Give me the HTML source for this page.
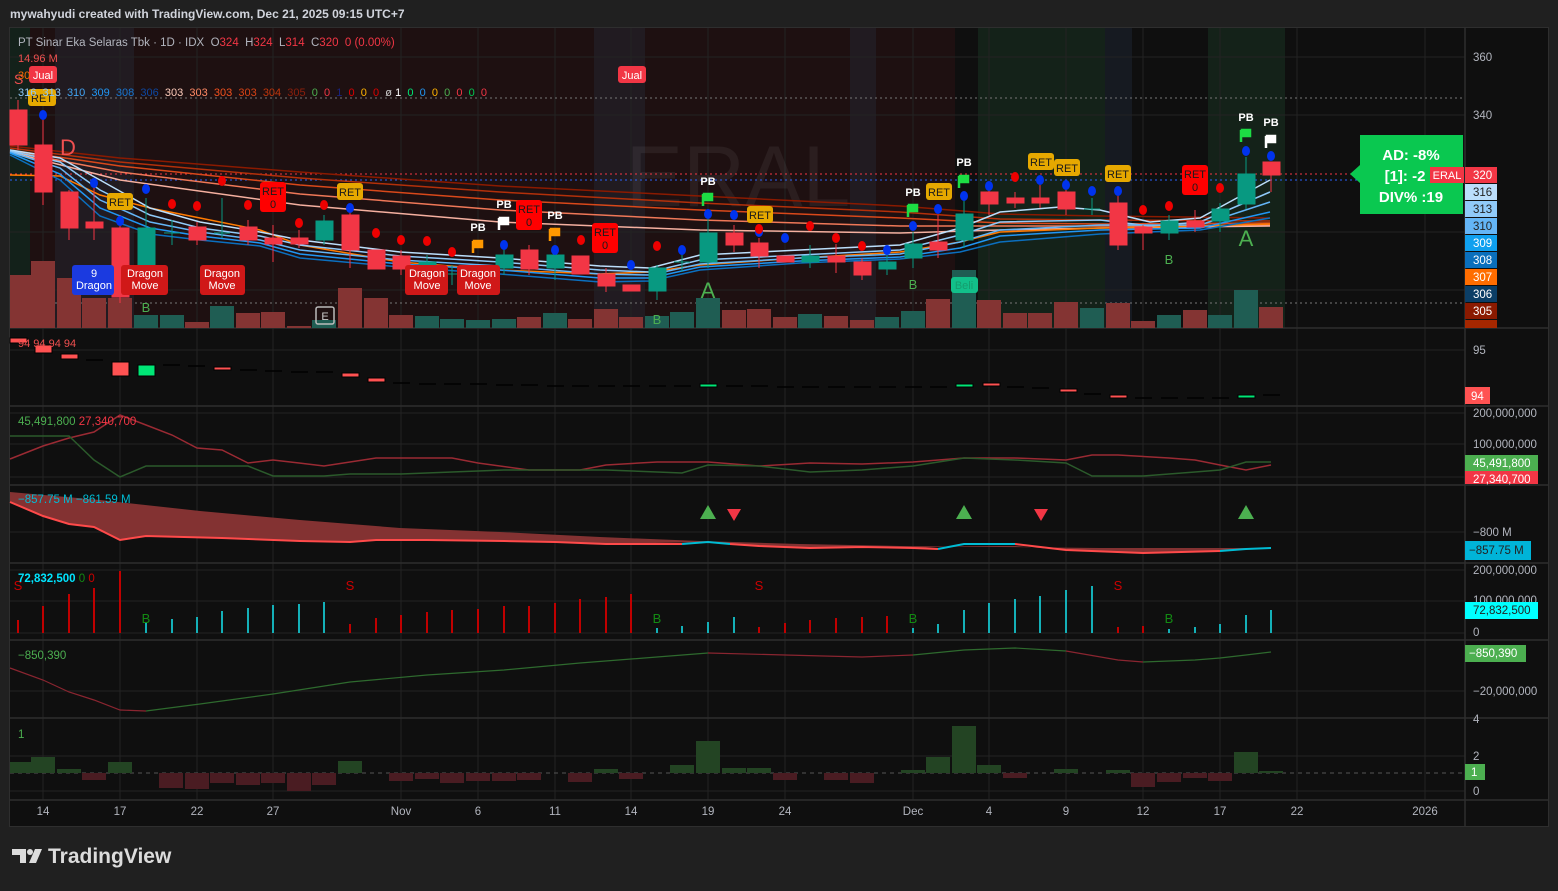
<!DOCTYPE html>
<html><head><meta charset="utf-8"><style>
html,body{margin:0;padding:0;background:#202020;}
body{width:1558px;height:886px;overflow:hidden;position:relative;font-family:"Liberation Sans",sans-serif;}
svg text{font-family:"Liberation Sans","DejaVu Sans",sans-serif;}
</style></head><body>
<svg width="1558" height="886" viewBox="0 0 1558 886" xmlns="http://www.w3.org/2000/svg">
<rect x="0" y="0" width="1558" height="886" fill="#202020"/>
<text x="10" y="18" font-size="12" font-weight="bold" fill="#d1d4dc">mywahyudi created with TradingView.com, Dec 21, 2025 09:15 UTC+7</text>
<rect x="9.5" y="27.5" width="1539" height="799" fill="#0f0f0f" stroke="#2e2e2e"/>
<rect x="10" y="28" width="945" height="300" fill="#1e1011"/>
<rect x="10" y="28" width="20" height="300" fill="#13211a"/>
<rect x="55" y="28" width="79" height="300" fill="#211b21"/>
<rect x="594" y="28" width="51" height="300" fill="#211b21"/>
<rect x="850" y="28" width="26" height="300" fill="#211b21"/>
<rect x="978" y="28" width="127" height="300" fill="#142219"/>
<rect x="1105" y="28" width="27" height="300" fill="#161a21"/>
<rect x="1208" y="28" width="77" height="300" fill="#142219"/>
<g stroke="#232323" stroke-width="1">
<line x1="43" y1="28" x2="43" y2="800"/><line x1="120" y1="28" x2="120" y2="800"/><line x1="197" y1="28" x2="197" y2="800"/><line x1="273" y1="28" x2="273" y2="800"/><line x1="401" y1="28" x2="401" y2="800"/><line x1="478" y1="28" x2="478" y2="800"/><line x1="555" y1="28" x2="555" y2="800"/><line x1="631" y1="28" x2="631" y2="800"/><line x1="708" y1="28" x2="708" y2="800"/><line x1="785" y1="28" x2="785" y2="800"/><line x1="913" y1="28" x2="913" y2="800"/><line x1="989" y1="28" x2="989" y2="800"/><line x1="1066" y1="28" x2="1066" y2="800"/><line x1="1143" y1="28" x2="1143" y2="800"/><line x1="1220" y1="28" x2="1220" y2="800"/><line x1="1297" y1="28" x2="1297" y2="800"/><line x1="1425" y1="28" x2="1425" y2="800"/>
<line x1="10" y1="57" x2="1465" y2="57"/><line x1="10" y1="115" x2="1465" y2="115"/><line x1="10" y1="232" x2="1465" y2="232"/><line x1="10" y1="290" x2="1465" y2="290"/>
<line x1="10" y1="350" x2="1465" y2="350"/><line x1="10" y1="413" x2="1465" y2="413"/><line x1="10" y1="444" x2="1465" y2="444"/><line x1="10" y1="477" x2="1465" y2="477"/><line x1="10" y1="532" x2="1465" y2="532"/><line x1="10" y1="570" x2="1465" y2="570"/><line x1="10" y1="601" x2="1465" y2="601"/><line x1="10" y1="633" x2="1465" y2="633"/><line x1="10" y1="691" x2="1465" y2="691"/><line x1="10" y1="756" x2="1465" y2="756"/><line x1="10" y1="791" x2="1465" y2="791"/>
</g>
<g stroke="#2e2e2e" stroke-width="1.5">
<line x1="10" y1="328" x2="1548" y2="328"/><line x1="10" y1="406" x2="1548" y2="406"/><line x1="10" y1="485" x2="1548" y2="485"/><line x1="10" y1="563" x2="1548" y2="563"/><line x1="10" y1="640" x2="1548" y2="640"/><line x1="10" y1="718" x2="1548" y2="718"/><line x1="10" y1="800" x2="1548" y2="800"/>
<line x1="1465" y1="28" x2="1465" y2="826"/>
</g>
<text x="738" y="206" font-size="86" fill="#ffffff" fill-opacity="0.06" text-anchor="middle">ERAL</text>
<line x1="10" y1="98" x2="1465" y2="98" stroke="#777" stroke-dasharray="2,3"/>
<line x1="10" y1="303" x2="1465" y2="303" stroke="#777" stroke-dasharray="2,3"/>
<line x1="10" y1="174" x2="1465" y2="174" stroke="#f23645" stroke-dasharray="2,3"/>
<line x1="10" y1="180" x2="1465" y2="180" stroke="#2962ff" stroke-dasharray="2,3"/>
<g fill="#843433">
<rect x="10" y="275" width="21" height="53"/><rect x="31" y="261" width="24" height="67"/><rect x="57" y="278" width="24" height="50"/><rect x="82" y="298" width="24" height="30"/><rect x="108" y="298" width="24" height="30"/><rect x="185" y="322" width="24" height="6"/><rect x="236" y="313" width="24" height="15"/><rect x="261" y="312" width="24" height="16"/><rect x="287" y="326" width="24" height="2"/><rect x="338" y="288" width="24" height="40"/><rect x="364" y="298" width="24" height="30"/><rect x="389" y="315" width="24" height="13"/><rect x="517" y="317" width="24" height="11"/><rect x="568" y="319" width="24" height="9"/><rect x="594" y="309" width="24" height="19"/><rect x="619" y="317" width="24" height="11"/><rect x="722" y="310" width="24" height="18"/><rect x="747" y="309" width="24" height="19"/><rect x="773" y="317" width="24" height="11"/><rect x="824" y="316" width="24" height="12"/><rect x="850" y="320" width="24" height="8"/><rect x="926" y="299" width="24" height="29"/><rect x="977" y="300" width="24" height="28"/><rect x="1003" y="313" width="24" height="15"/><rect x="1028" y="313" width="24" height="15"/><rect x="1054" y="302" width="24" height="26"/><rect x="1106" y="303" width="24" height="25"/><rect x="1131" y="321" width="24" height="7"/><rect x="1183" y="310" width="24" height="18"/><rect x="1259" y="307" width="24" height="21"/>
</g>
<g fill="#1f5d53">
<rect x="134" y="315" width="24" height="13"/><rect x="160" y="315" width="24" height="13"/><rect x="210" y="306" width="24" height="22"/><rect x="312" y="320" width="24" height="8"/><rect x="415" y="316" width="24" height="12"/><rect x="440" y="319" width="24" height="9"/><rect x="466" y="320" width="24" height="8"/><rect x="492" y="319" width="24" height="9"/><rect x="543" y="313" width="24" height="15"/><rect x="645" y="316" width="24" height="12"/><rect x="670" y="312" width="24" height="16"/><rect x="696" y="298" width="24" height="30"/><rect x="798" y="314" width="24" height="14"/><rect x="875" y="317" width="24" height="11"/><rect x="901" y="311" width="24" height="17"/><rect x="952" y="270" width="24" height="58"/><rect x="1080" y="308" width="24" height="20"/><rect x="1157" y="315" width="24" height="13"/><rect x="1208" y="315" width="24" height="13"/><rect x="1234" y="290" width="24" height="38"/>
</g>
<g fill="none" stroke-width="1.5">
<polyline stroke="#8b1a00" points="10,146 120,158 300,172 500,186 700,196 900,206 1000,214 1100,216 1270,218"/>
<polyline stroke="#b3300a" points="10,148 120,162 300,178 500,192 700,203 900,212 1000,219 1100,220 1270,221"/>
<polyline stroke="#d9481a" points="10,150 120,166 300,185 500,200 700,210 900,218 1000,223 1100,224 1270,223"/>
<polyline stroke="#f07858" points="10,151 120,172 300,194 500,210 700,220 900,226 1000,226 1100,226 1270,225"/>
<polyline stroke="#f5b0a0" points="10,152 120,180 300,205 500,222 700,230 900,233 1000,230 1100,228 1270,226"/>
<polyline stroke="#ff7a00" points="10,175 60,176 100,195 150,208 200,218 260,230 300,245 400,262 500,270 600,274 650,272 700,265 800,258 900,252 960,242 1000,232 1100,228 1200,226 1270,224"/>
<polyline stroke="#bbdefb" points="10,150 60,158 100,180 150,208 200,222 260,232 300,240 400,252 500,258 600,266 650,268 700,255 800,250 900,245 960,228 1000,212 1060,207 1100,210 1150,222 1200,218 1270,180"/>
<polyline stroke="#90caf9" points="10,151 60,162 100,190 150,215 200,228 260,236 300,245 400,256 500,262 600,270 650,272 700,260 800,255 900,250 960,235 1000,222 1100,220 1150,226 1200,222 1270,192"/>
<polyline stroke="#64b5f6" points="10,152 60,168 100,200 150,222 200,232 260,240 300,250 400,260 500,266 600,274 650,275 700,264 800,258 900,254 960,242 1000,230 1100,225 1200,225 1270,202"/>
<polyline stroke="#2196f3" points="10,153 60,174 100,208 150,228 200,236 260,243 300,254 400,264 500,270 600,278 650,278 700,267 800,261 900,257 960,248 1000,236 1100,230 1200,228 1270,212"/>
<polyline stroke="#0b6fbf" points="10,155 60,180 100,216 150,234 200,240 260,246 300,258 400,267 500,274 600,282 650,281 700,270 800,263 900,259 960,252 1000,242 1100,234 1200,230 1270,218"/>
</g>
<g stroke-width="1">
<g fill="#f23645" stroke="#f23645">
<line x1="18" y1="100" x2="18" y2="150"/><rect x="10" y="110" width="17" height="35"/>
<line x1="43" y1="115" x2="43" y2="205"/><rect x="35" y="145" width="17" height="47"/>
<line x1="69" y1="190" x2="69" y2="240"/><rect x="61" y="192" width="17" height="36"/>
<line x1="94" y1="185" x2="94" y2="240"/><rect x="86" y="222" width="17" height="6"/>
<line x1="120" y1="215" x2="120" y2="303"/><rect x="112" y="228" width="17" height="69"/>
<line x1="197" y1="222" x2="197" y2="245"/><rect x="189" y="227" width="17" height="13"/>
<line x1="248" y1="220" x2="248" y2="245"/><rect x="240" y="227" width="17" height="13"/>
<line x1="273" y1="225" x2="273" y2="262"/><rect x="265" y="238" width="17" height="6"/>
<line x1="299" y1="230" x2="299" y2="248"/><rect x="291" y="238" width="17" height="6"/>
<line x1="350" y1="210" x2="350" y2="268"/><rect x="342" y="215" width="17" height="35"/>
<rect x="368" y="250" width="17" height="19"/>
<line x1="401" y1="250" x2="401" y2="275"/><rect x="393" y="256" width="17" height="13"/>
<line x1="529" y1="245" x2="529" y2="275"/><rect x="521" y="250" width="17" height="19"/>
<rect x="572" y="256" width="17" height="18"/>
<line x1="606" y1="268" x2="606" y2="292"/><rect x="598" y="274" width="17" height="12"/>
<rect x="623" y="285" width="17" height="6"/>
<line x1="734" y1="225" x2="734" y2="252"/><rect x="726" y="233" width="17" height="12"/>
<line x1="759" y1="238" x2="759" y2="268"/><rect x="751" y="243" width="17" height="13"/>
<rect x="777" y="256" width="17" height="6"/>
<line x1="836" y1="244" x2="836" y2="273"/><rect x="828" y="256" width="17" height="6"/>
<line x1="862" y1="258" x2="862" y2="280"/><rect x="854" y="262" width="17" height="13"/>
<line x1="938" y1="215" x2="938" y2="258"/><rect x="930" y="242" width="17" height="8"/>
<line x1="989" y1="190" x2="989" y2="215"/><rect x="981" y="192" width="17" height="12"/>
<line x1="1015" y1="192" x2="1015" y2="208"/><rect x="1007" y="198" width="17" height="5"/>
<line x1="1040" y1="185" x2="1040" y2="208"/><rect x="1032" y="198" width="17" height="5"/>
<line x1="1066" y1="185" x2="1066" y2="215"/><rect x="1058" y="192" width="17" height="17"/>
<line x1="1118" y1="195" x2="1118" y2="250"/><rect x="1110" y="203" width="17" height="42"/>
<line x1="1143" y1="225" x2="1143" y2="250"/><rect x="1135" y="227" width="17" height="6"/>
<line x1="1195" y1="210" x2="1195" y2="232"/><rect x="1187" y="221" width="17" height="6"/>
<line x1="1271" y1="162" x2="1271" y2="192"/><rect x="1263" y="162" width="17" height="13"/>
</g>
<g fill="#089981" stroke="#089981">
<line x1="146" y1="198" x2="146" y2="295"/><rect x="138" y="228" width="17" height="59"/>
<line x1="172" y1="220" x2="172" y2="245"/><line x1="164" y1="233" x2="180" y2="233"/>
<line x1="222" y1="198" x2="222" y2="238"/><line x1="214" y1="233" x2="230" y2="233"/>
<line x1="324" y1="215" x2="324" y2="245"/><rect x="316" y="221" width="17" height="19"/>
<line x1="427" y1="255" x2="427" y2="275"/><rect x="419" y="262" width="17" height="5"/>
<line x1="452" y1="265" x2="452" y2="285"/><line x1="444" y1="274" x2="460" y2="274"/>
<rect x="470" y="268" width="17" height="13"/>
<line x1="504" y1="245" x2="504" y2="275"/><rect x="496" y="255" width="17" height="13"/>
<line x1="555" y1="245" x2="555" y2="280"/><rect x="547" y="255" width="17" height="13"/>
<line x1="657" y1="265" x2="657" y2="300"/><rect x="649" y="268" width="17" height="23"/>
<line x1="682" y1="255" x2="682" y2="272"/><line x1="674" y1="262" x2="690" y2="262"/>
<line x1="708" y1="215" x2="708" y2="268"/><rect x="700" y="233" width="17" height="29"/>
<line x1="810" y1="245" x2="810" y2="268"/><rect x="802" y="256" width="17" height="6"/>
<line x1="887" y1="255" x2="887" y2="275"/><rect x="879" y="262" width="17" height="7"/>
<line x1="913" y1="232" x2="913" y2="268"/><rect x="905" y="244" width="17" height="14"/>
<line x1="964" y1="200" x2="964" y2="248"/><rect x="956" y="214" width="17" height="26"/>
<line x1="1092" y1="198" x2="1092" y2="215"/><line x1="1084" y1="209" x2="1100" y2="209"/>
<line x1="1169" y1="215" x2="1169" y2="240"/><rect x="1161" y="221" width="17" height="12"/>
<line x1="1220" y1="203" x2="1220" y2="232"/><rect x="1212" y="209" width="17" height="12"/>
<line x1="1246" y1="157" x2="1246" y2="209"/><rect x="1238" y="174" width="17" height="30"/>
</g>
</g>
<g fill="#0033ee">
<ellipse cx="43" cy="115" rx="4" ry="5"/><ellipse cx="94" cy="183" rx="4" ry="5"/><ellipse cx="120" cy="221" rx="4" ry="5"/><ellipse cx="146" cy="189" rx="4" ry="5"/><ellipse cx="350" cy="208" rx="4" ry="5"/><ellipse cx="504" cy="245" rx="4" ry="5"/><ellipse cx="555" cy="250" rx="4" ry="5"/><ellipse cx="631" cy="265" rx="4" ry="5"/><ellipse cx="682" cy="250" rx="4" ry="5"/><ellipse cx="708" cy="214" rx="4" ry="5"/><ellipse cx="734" cy="215" rx="4" ry="5"/><ellipse cx="759" cy="232" rx="4" ry="5"/><ellipse cx="785" cy="238" rx="4" ry="5"/><ellipse cx="887" cy="250" rx="4" ry="5"/><ellipse cx="913" cy="226" rx="4" ry="5"/><ellipse cx="938" cy="209" rx="4" ry="5"/><ellipse cx="964" cy="196" rx="4" ry="5"/><ellipse cx="989" cy="186" rx="4" ry="5"/><ellipse cx="1040" cy="180" rx="4" ry="5"/><ellipse cx="1066" cy="185" rx="4" ry="5"/><ellipse cx="1092" cy="191" rx="4" ry="5"/><ellipse cx="1118" cy="191" rx="4" ry="5"/><ellipse cx="1246" cy="151" rx="4" ry="5"/><ellipse cx="1271" cy="156" rx="4" ry="5"/>
</g>
<g fill="#ee0000">
<ellipse cx="172" cy="204" rx="4" ry="5"/><ellipse cx="197" cy="206" rx="4" ry="5"/><ellipse cx="222" cy="181" rx="4" ry="5"/><ellipse cx="248" cy="205" rx="4" ry="5"/><ellipse cx="299" cy="223" rx="4" ry="5"/><ellipse cx="324" cy="205" rx="4" ry="5"/><ellipse cx="376" cy="233" rx="4" ry="5"/><ellipse cx="401" cy="240" rx="4" ry="5"/><ellipse cx="427" cy="241" rx="4" ry="5"/><ellipse cx="452" cy="252" rx="4" ry="5"/><ellipse cx="581" cy="240" rx="4" ry="5"/><ellipse cx="657" cy="246" rx="4" ry="5"/><ellipse cx="759" cy="229" rx="4" ry="5"/><ellipse cx="810" cy="226" rx="4" ry="5"/><ellipse cx="836" cy="238" rx="4" ry="5"/><ellipse cx="862" cy="246" rx="4" ry="5"/><ellipse cx="1015" cy="177" rx="4" ry="5"/><ellipse cx="1143" cy="210" rx="4" ry="5"/><ellipse cx="1169" cy="206" rx="4" ry="5"/><ellipse cx="1220" cy="188" rx="4" ry="5"/>
</g>
<g font-size="11">
<g fill="#e6a800"><rect x="28" y="89" width="28" height="17" rx="3"/><rect x="107" y="193" width="26" height="17" rx="3"/><rect x="337" y="183" width="26" height="17" rx="3"/><rect x="747" y="206" width="26" height="17" rx="3"/><rect x="926" y="183" width="26" height="17" rx="3"/><rect x="1028" y="153" width="26" height="17" rx="3"/><rect x="1054" y="159" width="26" height="17" rx="3"/><rect x="1105" y="165" width="26" height="17" rx="3"/></g>
<g fill="#1a1a1a"><text x="31" y="102">RET</text><text x="109" y="206">RET</text><text x="339" y="196">RET</text><text x="749" y="219">RET</text><text x="928" y="196">RET</text><text x="1030" y="166">RET</text><text x="1056" y="172">RET</text><text x="1107" y="178">RET</text></g>
<g fill="#ff0000"><rect x="260" y="182" width="26" height="30" rx="3"/><rect x="516" y="200" width="26" height="30" rx="3"/><rect x="592" y="223" width="26" height="30" rx="3"/><rect x="1182" y="165" width="26" height="30" rx="3"/></g>
<g fill="#1a1a1a" text-anchor="middle"><text x="273" y="195">RET</text><text x="273" y="208">0</text><text x="529" y="213">RET</text><text x="529" y="226">0</text><text x="605" y="236">RET</text><text x="605" y="249">0</text><text x="1195" y="178">RET</text><text x="1195" y="191">0</text></g>
<g fill="#f23645"><rect x="618" y="66" width="28" height="17" rx="3"/><rect x="29" y="66" width="28" height="17" rx="3"/></g>
<g fill="#fff" text-anchor="middle"><text x="632" y="79">Jual</text><text x="43" y="79">Jual</text></g>
<g fill="#d01818"><rect x="200" y="265" width="45" height="30" rx="3"/><rect x="405" y="265" width="43" height="30" rx="3"/><rect x="457" y="265" width="43" height="30" rx="3"/><rect x="121" y="265" width="47" height="30" rx="3"/></g>
<rect x="72" y="265" width="42" height="30" rx="3" fill="#1b3ae0"/>
<g fill="#fff" text-anchor="middle"><text x="222" y="277">Dragon</text><text x="222" y="289">Move</text><text x="427" y="277">Dragon</text><text x="427" y="289">Move</text><text x="478" y="277">Dragon</text><text x="478" y="289">Move</text><text x="145" y="277">Dragon</text><text x="145" y="289">Move</text><text x="94" y="277">9</text><text x="94" y="289">Dragon</text></g>
<g fill="#fff" font-weight="bold" text-anchor="middle"><text x="478" y="231">PB</text><text x="504" y="208">PB</text><text x="555" y="219">PB</text><text x="708" y="185">PB</text><text x="913" y="196">PB</text><text x="964" y="166">PB</text><text x="1246" y="121">PB</text><text x="1271" y="126">PB</text></g>
<rect x="951" y="277" width="27" height="16" rx="3" fill="#12c08a"/><text x="964" y="289" fill="#159d6e" text-anchor="middle">Beli</text>
<rect x="316" y="307" width="18" height="17" fill="none" stroke="#bbb" stroke-width="1.5" rx="2"/><text x="325" y="320" fill="#ccc" text-anchor="middle">E</text>
</g>
<g stroke-width="2.5">
<g fill="#ff9800" stroke="#ff9800"><line x1="473" y1="241" x2="473" y2="253"/><rect x="474" y="241" width="8" height="6"/><line x1="550" y1="229" x2="550" y2="241"/><rect x="551" y="229" width="8" height="6"/></g>
<g fill="#fff" stroke="#fff"><line x1="499" y1="218" x2="499" y2="230"/><rect x="500" y="218" width="8" height="6"/><line x1="1266" y1="136" x2="1266" y2="148"/><rect x="1267" y="136" width="8" height="6"/></g>
<g fill="#1ddd44" stroke="#1ddd44"><line x1="703" y1="194" x2="703" y2="206"/><rect x="704" y="194" width="8" height="6"/><line x1="908" y1="205" x2="908" y2="217"/><rect x="909" y="205" width="8" height="6"/><line x1="959" y1="176" x2="959" y2="188"/><rect x="960" y="176" width="8" height="6"/><line x1="1241" y1="130" x2="1241" y2="142"/><rect x="1242" y="130" width="8" height="6"/></g>
</g>
<g font-size="22" fill="#4caf50" text-anchor="middle"><text x="708" y="298">A</text><text x="1246" y="246">A</text></g>
<g font-size="13" fill="#4caf50" text-anchor="middle"><text x="146" y="312">B</text><text x="657" y="324">B</text><text x="913" y="289">B</text><text x="1169" y="264">B</text></g>
<text x="60" y="155" font-size="22" fill="#f05050">D</text>
<text x="14" y="84" font-size="14" fill="#f05050">S</text>
<text x="18" y="46" font-size="11.5" fill="#b2b5be" xml:space="preserve">PT Sinar Eka Selaras Tbk · 1D · IDX  O<tspan fill="#f23645">324</tspan>  H<tspan fill="#f23645">324</tspan>  L<tspan fill="#f23645">314</tspan>  C<tspan fill="#f23645">320</tspan>  <tspan fill="#f23645">0 (0.00%)</tspan></text>
<text x="18" y="62" font-size="11" fill="#f05050">14.96 M</text>
<text x="18" y="79" font-size="11" fill="#ff6d00">30</text>
<text x="18" y="96" font-size="11" fill="#90caf9" xml:space="preserve">316  313  <tspan fill="#42a5f5">310</tspan>  <tspan fill="#2196f3">309</tspan>  <tspan fill="#1976d2">308</tspan>  <tspan fill="#0d47a1">306</tspan>  <tspan fill="#ffccbc">303</tspan>  <tspan fill="#ff8a65">303</tspan>  <tspan fill="#f4511e">303</tspan>  <tspan fill="#d84315">303</tspan>  <tspan fill="#bf360c">304</tspan>  <tspan fill="#8d1f0c">305</tspan>  <tspan fill="#4caf50">0</tspan>  <tspan fill="#f23645">0</tspan>  <tspan fill="#1a237e">1</tspan>  <tspan fill="#d00">0</tspan>  <tspan fill="#ffb300">0</tspan>  <tspan fill="#d00">0</tspan>  <tspan fill="#ccc">ø</tspan> <tspan fill="#fff">1</tspan>  <tspan fill="#00e676">0</tspan>  <tspan fill="#2196f3">0</tspan>  <tspan fill="#ffb300">0</tspan>  <tspan fill="#4caf50">0</tspan>  <tspan fill="#f23645">0</tspan>  <tspan fill="#00c853">0</tspan>  <tspan fill="#f23645">0</tspan></text>
<!-- pane2 -->
<g fill="#ff5252" stroke="#000" stroke-width="1">
<rect x="10" y="338" width="17" height="5"/><rect x="35" y="345" width="17" height="8"/><rect x="61" y="354" width="17" height="5"/><rect x="112" y="362" width="17" height="14"/><rect x="214" y="367" width="17" height="3"/><rect x="342" y="373" width="17" height="4"/><rect x="368" y="378" width="17" height="4"/><rect x="983" y="383" width="17" height="3"/><rect x="1060" y="389" width="17" height="3"/><rect x="1110" y="395" width="17" height="3"/>
<rect x="138" y="365" width="17" height="11" fill="#00e676"/><rect x="700" y="384" width="17" height="3" fill="#00e676"/><rect x="956" y="384" width="17" height="3" fill="#00e676"/><rect x="1238" y="395" width="17" height="3" fill="#00e676"/>
</g>
<g stroke="#000" stroke-width="1.5">
<line x1="86" y1="360" x2="103" y2="360"/><line x1="163" y1="365" x2="180" y2="365"/><line x1="188" y1="366" x2="205" y2="366"/><line x1="240" y1="370" x2="257" y2="370"/><line x1="265" y1="371" x2="282" y2="371"/><line x1="291" y1="372" x2="308" y2="372"/><line x1="316" y1="372" x2="333" y2="372"/>
<line x1="393" y1="383" x2="410" y2="383"/><line x1="419" y1="384" x2="436" y2="384"/><line x1="444" y1="384" x2="461" y2="384"/><line x1="470" y1="384" x2="487" y2="384"/><line x1="496" y1="385" x2="513" y2="385"/><line x1="521" y1="385" x2="538" y2="385"/><line x1="547" y1="386" x2="564" y2="386"/><line x1="572" y1="386" x2="589" y2="386"/><line x1="598" y1="386" x2="615" y2="386"/><line x1="623" y1="386" x2="640" y2="386"/><line x1="649" y1="386" x2="666" y2="386"/><line x1="674" y1="386" x2="691" y2="386"/><line x1="726" y1="386" x2="743" y2="386"/><line x1="751" y1="386" x2="768" y2="386"/><line x1="777" y1="387" x2="794" y2="387"/><line x1="802" y1="387" x2="819" y2="387"/><line x1="828" y1="387" x2="845" y2="387"/><line x1="854" y1="387" x2="871" y2="387"/><line x1="879" y1="387" x2="896" y2="387"/><line x1="905" y1="387" x2="922" y2="387"/><line x1="930" y1="387" x2="947" y2="387"/><line x1="1007" y1="387" x2="1024" y2="387"/><line x1="1032" y1="388" x2="1049" y2="388"/><line x1="1084" y1="394" x2="1101" y2="394"/><line x1="1135" y1="398" x2="1152" y2="398"/><line x1="1161" y1="398" x2="1178" y2="398"/><line x1="1187" y1="398" x2="1204" y2="398"/><line x1="1212" y1="398" x2="1229" y2="398"/><line x1="1263" y1="395" x2="1280" y2="395"/>
</g>
<text x="18" y="347" font-size="11" fill="#f05050">94  94  94  94</text>
<!-- pane3 -->
<polyline fill="none" stroke="#9a2a33" stroke-width="1.5" points="10,459 43,446 69,438 94,432 120,415 146,425 172,435 197,448 222,450 248,463 273,460 299,463 324,466 350,462 376,458 452,458 478,463 529,470 580,470 606,465 657,462 708,462 759,466 810,463 862,464 913,462 964,458 1015,458 1066,460 1092,455 1118,455 1169,458 1195,460 1220,465 1246,470 1271,465"/>
<polyline fill="none" stroke="#2b5a2b" stroke-width="1.5" points="10,436 69,436 94,460 120,477 146,466 248,466 273,476 324,476 350,474 401,474 452,472 504,470 555,470 606,470 682,473 708,465 759,466 810,472 862,470 913,466 964,458 1015,460 1066,463 1092,476 1143,476 1195,472 1220,470 1246,462 1271,462"/>
<text x="18" y="425" font-size="11.5" fill="#4caf50">45,491,800 <tspan fill="#f23645">27,340,700</tspan></text>
<!-- pane4 -->
<polygon fill="#833232" points="10,492 100,500 200,511 300,520 400,528 500,532 600,537 700,541 800,544 900,546 1000,547 1100,548 1270,548 1220,551 1143,553 1066,550 1015,546 964,546 913,548 862,547 810,548 759,546 708,542 606,544 555,542 504,541 452,541 427,540 376,540 350,542 300,541 222,538 146,536 120,540 94,527 69,524 43,516 10,502"/>
<polyline fill="none" stroke="#ff4a4a" stroke-width="2" points="10,502 43,516 69,524 94,527 120,540 146,536 222,538 300,541 350,542 376,540 427,540 504,541 555,542 606,544 682,544"/>
<polyline fill="none" stroke="#00bcd4" stroke-width="2" points="682,544 708,542 730,544"/>
<polyline fill="none" stroke="#ff4a4a" stroke-width="2" points="730,544 759,546 810,548 862,547 913,548 938,549"/>
<polyline fill="none" stroke="#00bcd4" stroke-width="2" points="938,549 964,544 1015,544"/>
<polyline fill="none" stroke="#ff4a4a" stroke-width="2" points="1015,544 1066,550 1143,553 1220,551"/>
<polyline fill="none" stroke="#00bcd4" stroke-width="2" points="1220,551 1246,549 1271,548"/>
<text x="18" y="503" font-size="11.5" fill="#00bcd4">−857.75 M  −861.59 M</text>
<g fill="#4caf50"><polygon points="708,505 716,519 700,519"/><polygon points="964,505 972,519 956,519"/><polygon points="1246,505 1254,519 1238,519"/></g>
<g fill="#f23645"><polygon points="727,509 741,509 734,521"/><polygon points="1034,509 1048,509 1041,521"/></g>
<!-- pane5 -->
<g stroke="#c00000" stroke-width="2">
<line x1="18" y1="633" x2="18" y2="620"/><line x1="43" y1="633" x2="43" y2="606"/><line x1="69" y1="633" x2="69" y2="594"/><line x1="94" y1="633" x2="94" y2="588"/><line x1="120" y1="633" x2="120" y2="571"/>
<line x1="350" y1="633" x2="350" y2="624"/><line x1="376" y1="633" x2="376" y2="618"/><line x1="401" y1="633" x2="401" y2="615"/><line x1="427" y1="633" x2="427" y2="612"/><line x1="452" y1="633" x2="452" y2="610"/><line x1="478" y1="633" x2="478" y2="609"/><line x1="504" y1="633" x2="504" y2="606"/><line x1="529" y1="633" x2="529" y2="606"/><line x1="555" y1="633" x2="555" y2="603"/><line x1="580" y1="633" x2="580" y2="599"/><line x1="606" y1="633" x2="606" y2="597"/><line x1="631" y1="633" x2="631" y2="594"/>
<line x1="759" y1="633" x2="759" y2="627"/><line x1="785" y1="633" x2="785" y2="623"/><line x1="810" y1="633" x2="810" y2="620"/><line x1="836" y1="633" x2="836" y2="618"/><line x1="862" y1="633" x2="862" y2="617"/><line x1="887" y1="633" x2="887" y2="616"/>
<line x1="1118" y1="633" x2="1118" y2="627"/><line x1="1143" y1="633" x2="1143" y2="626"/>
</g>
<g stroke="#14b0b8" stroke-width="2">
<line x1="146" y1="633" x2="146" y2="623"/><line x1="172" y1="633" x2="172" y2="619"/><line x1="197" y1="633" x2="197" y2="617"/><line x1="222" y1="633" x2="222" y2="611"/><line x1="248" y1="633" x2="248" y2="608"/><line x1="273" y1="633" x2="273" y2="605"/><line x1="299" y1="633" x2="299" y2="604"/><line x1="324" y1="633" x2="324" y2="602"/>
<line x1="657" y1="633" x2="657" y2="628"/><line x1="682" y1="633" x2="682" y2="626"/><line x1="708" y1="633" x2="708" y2="622"/><line x1="734" y1="633" x2="734" y2="617"/>
<line x1="913" y1="633" x2="913" y2="628"/><line x1="938" y1="633" x2="938" y2="624"/><line x1="964" y1="633" x2="964" y2="610"/><line x1="989" y1="633" x2="989" y2="603"/><line x1="1015" y1="633" x2="1015" y2="599"/><line x1="1040" y1="633" x2="1040" y2="596"/><line x1="1066" y1="633" x2="1066" y2="590"/><line x1="1092" y1="633" x2="1092" y2="586"/>
<line x1="1169" y1="633" x2="1169" y2="629"/><line x1="1195" y1="633" x2="1195" y2="627"/><line x1="1220" y1="633" x2="1220" y2="624"/><line x1="1246" y1="633" x2="1246" y2="615"/><line x1="1271" y1="633" x2="1271" y2="610"/>
</g>
<g font-size="13" fill="#cc0000" text-anchor="middle"><text x="18" y="590">S</text><text x="350" y="590">S</text><text x="759" y="590">S</text><text x="1118" y="590">S</text></g>
<g font-size="13" fill="#138a13" text-anchor="middle"><text x="146" y="623">B</text><text x="657" y="623">B</text><text x="913" y="623">B</text><text x="1169" y="623">B</text></g>
<text x="18" y="582" font-size="11.5" fill="#00e5ff" font-weight="bold">72,832,500 <tspan fill="#138a13" font-weight="normal"> 0</tspan><tspan fill="#cc0000" font-weight="normal">  0</tspan></text>
<!-- pane6 -->
<polyline fill="none" stroke="#8a2530" stroke-width="1.2" points="10,668 43,680 69,692 94,700 120,710 146,711"/>
<polyline fill="none" stroke="#2e6a2e" stroke-width="1.2" points="146,711 200,704 273,694 350,682 427,675 504,670 580,663 657,657 708,653"/>
<polyline fill="none" stroke="#8a2530" stroke-width="1.2" points="708,653 785,655 862,657 913,655"/>
<polyline fill="none" stroke="#2e6a2e" stroke-width="1.2" points="913,655 964,650 1015,648 1066,651"/>
<polyline fill="none" stroke="#8a2530" stroke-width="1.2" points="1066,651 1118,660 1143,662"/>
<polyline fill="none" stroke="#2e6a2e" stroke-width="1.2" points="1143,662 1195,660 1220,658 1246,655 1271,652"/>
<text x="18" y="659" font-size="11.5" fill="#4caf50">−850,390</text>
<!-- pane7 -->
<line x1="10" y1="773" x2="1465" y2="773" stroke="#555" stroke-dasharray="4,4"/>
<g fill="#234423">
<rect x="10" y="762" width="21" height="11"/><rect x="31" y="757" width="24" height="16"/><rect x="57" y="769" width="24" height="4"/><rect x="108" y="762" width="24" height="11"/><rect x="338" y="761" width="24" height="12"/><rect x="594" y="769" width="24" height="4"/><rect x="670" y="765" width="24" height="8"/><rect x="696" y="741" width="24" height="32"/><rect x="722" y="768" width="24" height="5"/><rect x="747" y="768" width="24" height="5"/><rect x="901" y="770" width="24" height="3"/><rect x="926" y="757" width="24" height="16"/><rect x="952" y="726" width="24" height="47"/><rect x="977" y="765" width="24" height="8"/><rect x="1054" y="769" width="24" height="4"/><rect x="1106" y="770" width="24" height="3"/><rect x="1234" y="752" width="24" height="21"/><rect x="1259" y="771" width="24" height="2"/>
</g>
<g fill="#4a1c22">
<rect x="82" y="773" width="24" height="7"/><rect x="159" y="773" width="24" height="15"/><rect x="185" y="773" width="24" height="16"/><rect x="210" y="773" width="24" height="10"/><rect x="236" y="773" width="24" height="12"/><rect x="261" y="773" width="24" height="10"/><rect x="287" y="773" width="24" height="18"/><rect x="312" y="773" width="24" height="12"/><rect x="389" y="773" width="24" height="8"/><rect x="415" y="773" width="24" height="6"/><rect x="440" y="773" width="24" height="10"/><rect x="466" y="773" width="24" height="8"/><rect x="492" y="773" width="24" height="8"/><rect x="517" y="773" width="24" height="7"/><rect x="568" y="773" width="24" height="9"/><rect x="619" y="773" width="24" height="6"/><rect x="773" y="773" width="24" height="7"/><rect x="824" y="773" width="24" height="7"/><rect x="850" y="773" width="24" height="10"/><rect x="1003" y="773" width="24" height="5"/><rect x="1131" y="773" width="24" height="14"/><rect x="1157" y="773" width="24" height="9"/><rect x="1183" y="773" width="24" height="5"/><rect x="1208" y="773" width="24" height="8"/>
</g>
<text x="18" y="738" font-size="11.5" fill="#4caf50">1</text>
<g font-size="11.5" fill="#b2b5be">
<text x="1473" y="61">360</text><text x="1473" y="119">340</text>
<text x="1473" y="354">95</text>
<text x="1473" y="417">200,000,000</text><text x="1473" y="448">100,000,000</text>
<text x="1473" y="536">−800 M</text>
<text x="1473" y="574">200,000,000</text><text x="1473" y="604">100,000,000</text><text x="1473" y="636">0</text>
<text x="1473" y="695">−20,000,000</text>
<text x="1473" y="723">4</text><text x="1473" y="760">2</text><text x="1473" y="795">0</text>
</g>
<g font-size="11.5" fill="#fff">
<rect x="1465" y="167" width="32" height="16" fill="#f23645"/><text x="1473" y="179">320</text>
<rect x="1465" y="184" width="32" height="16" fill="#bbdefb"/><text x="1473" y="196" fill="#222">316</text>
<rect x="1465" y="201" width="32" height="16" fill="#90caf9"/><text x="1473" y="213" fill="#222">313</text>
<rect x="1465" y="218" width="32" height="16" fill="#64b5f6"/><text x="1473" y="230" fill="#222">310</text>
<rect x="1465" y="235" width="32" height="16" fill="#0fa0ef"/><text x="1473" y="247">309</text>
<rect x="1465" y="252" width="32" height="16" fill="#0a6fbc"/><text x="1473" y="264">308</text>
<rect x="1465" y="269" width="32" height="16" fill="#ff6d00"/><text x="1473" y="281">307</text>
<rect x="1465" y="286" width="32" height="16" fill="#0b3e66"/><text x="1473" y="298">306</text>
<rect x="1465" y="303" width="32" height="16" fill="#8b1a00"/><text x="1473" y="315">305</text>
<rect x="1465" y="320" width="32" height="8" fill="#a52700"/>
<rect x="1465" y="387" width="25" height="17" fill="#ff5252"/><text x="1471" y="400">94</text>
<rect x="1465" y="455" width="73" height="16" fill="#4caf50"/><text x="1473" y="467">45,491,800</text>
<rect x="1465" y="471" width="73" height="13" fill="#f23645"/><text x="1473" y="483">27,340,700</text>
<rect x="1465" y="541" width="66" height="19" fill="#00b4d8"/><text x="1469" y="554" fill="#222">−857.75 M</text>
<rect x="1465" y="602" width="73" height="17" fill="#00ffff"/><text x="1473" y="614" fill="#222">72,832,500</text>
<rect x="1465" y="645" width="61" height="17" fill="#4caf50"/><text x="1469" y="657">−850,390</text>
<rect x="1465" y="764" width="20" height="16" fill="#4caf50"/><text x="1471" y="776">1</text>
</g>
<polygon points="1360,135 1463,135 1463,214 1360,214 1360,183 1350,174 1360,165" fill="#0ac850"/>
<g font-size="15" font-weight="bold" fill="#fff" text-anchor="middle"><text x="1411" y="160">AD: -8%</text><text x="1405" y="181">[1]: -2</text><text x="1411" y="202">DIV% :19</text></g>
<rect x="1430" y="167" width="34" height="16" fill="#f23645"/><text x="1447" y="179" font-size="11" fill="#fff" text-anchor="middle">ERAL</text>
<g font-size="11.5" fill="#b2b5be" text-anchor="middle">
<text x="43" y="815">14</text><text x="120" y="815">17</text><text x="197" y="815">22</text><text x="273" y="815">27</text><text x="401" y="815">Nov</text><text x="478" y="815">6</text><text x="555" y="815">11</text><text x="631" y="815">14</text><text x="708" y="815">19</text><text x="785" y="815">24</text><text x="913" y="815">Dec</text><text x="989" y="815">4</text><text x="1066" y="815">9</text><text x="1143" y="815">12</text><text x="1220" y="815">17</text><text x="1297" y="815">22</text><text x="1425" y="815">2026</text>
</g>
<g fill="#dcdcdc">
<path d="M12 849h14v14h-6v-8h-8z"/>
<circle cx="30" cy="852" r="3"/>
<path d="M35 849h7l-6 14h-7z"/>
</g>
<text x="48" y="863" font-size="21" font-weight="bold" fill="#dcdcdc">TradingView</text>
</svg>
</body></html>
